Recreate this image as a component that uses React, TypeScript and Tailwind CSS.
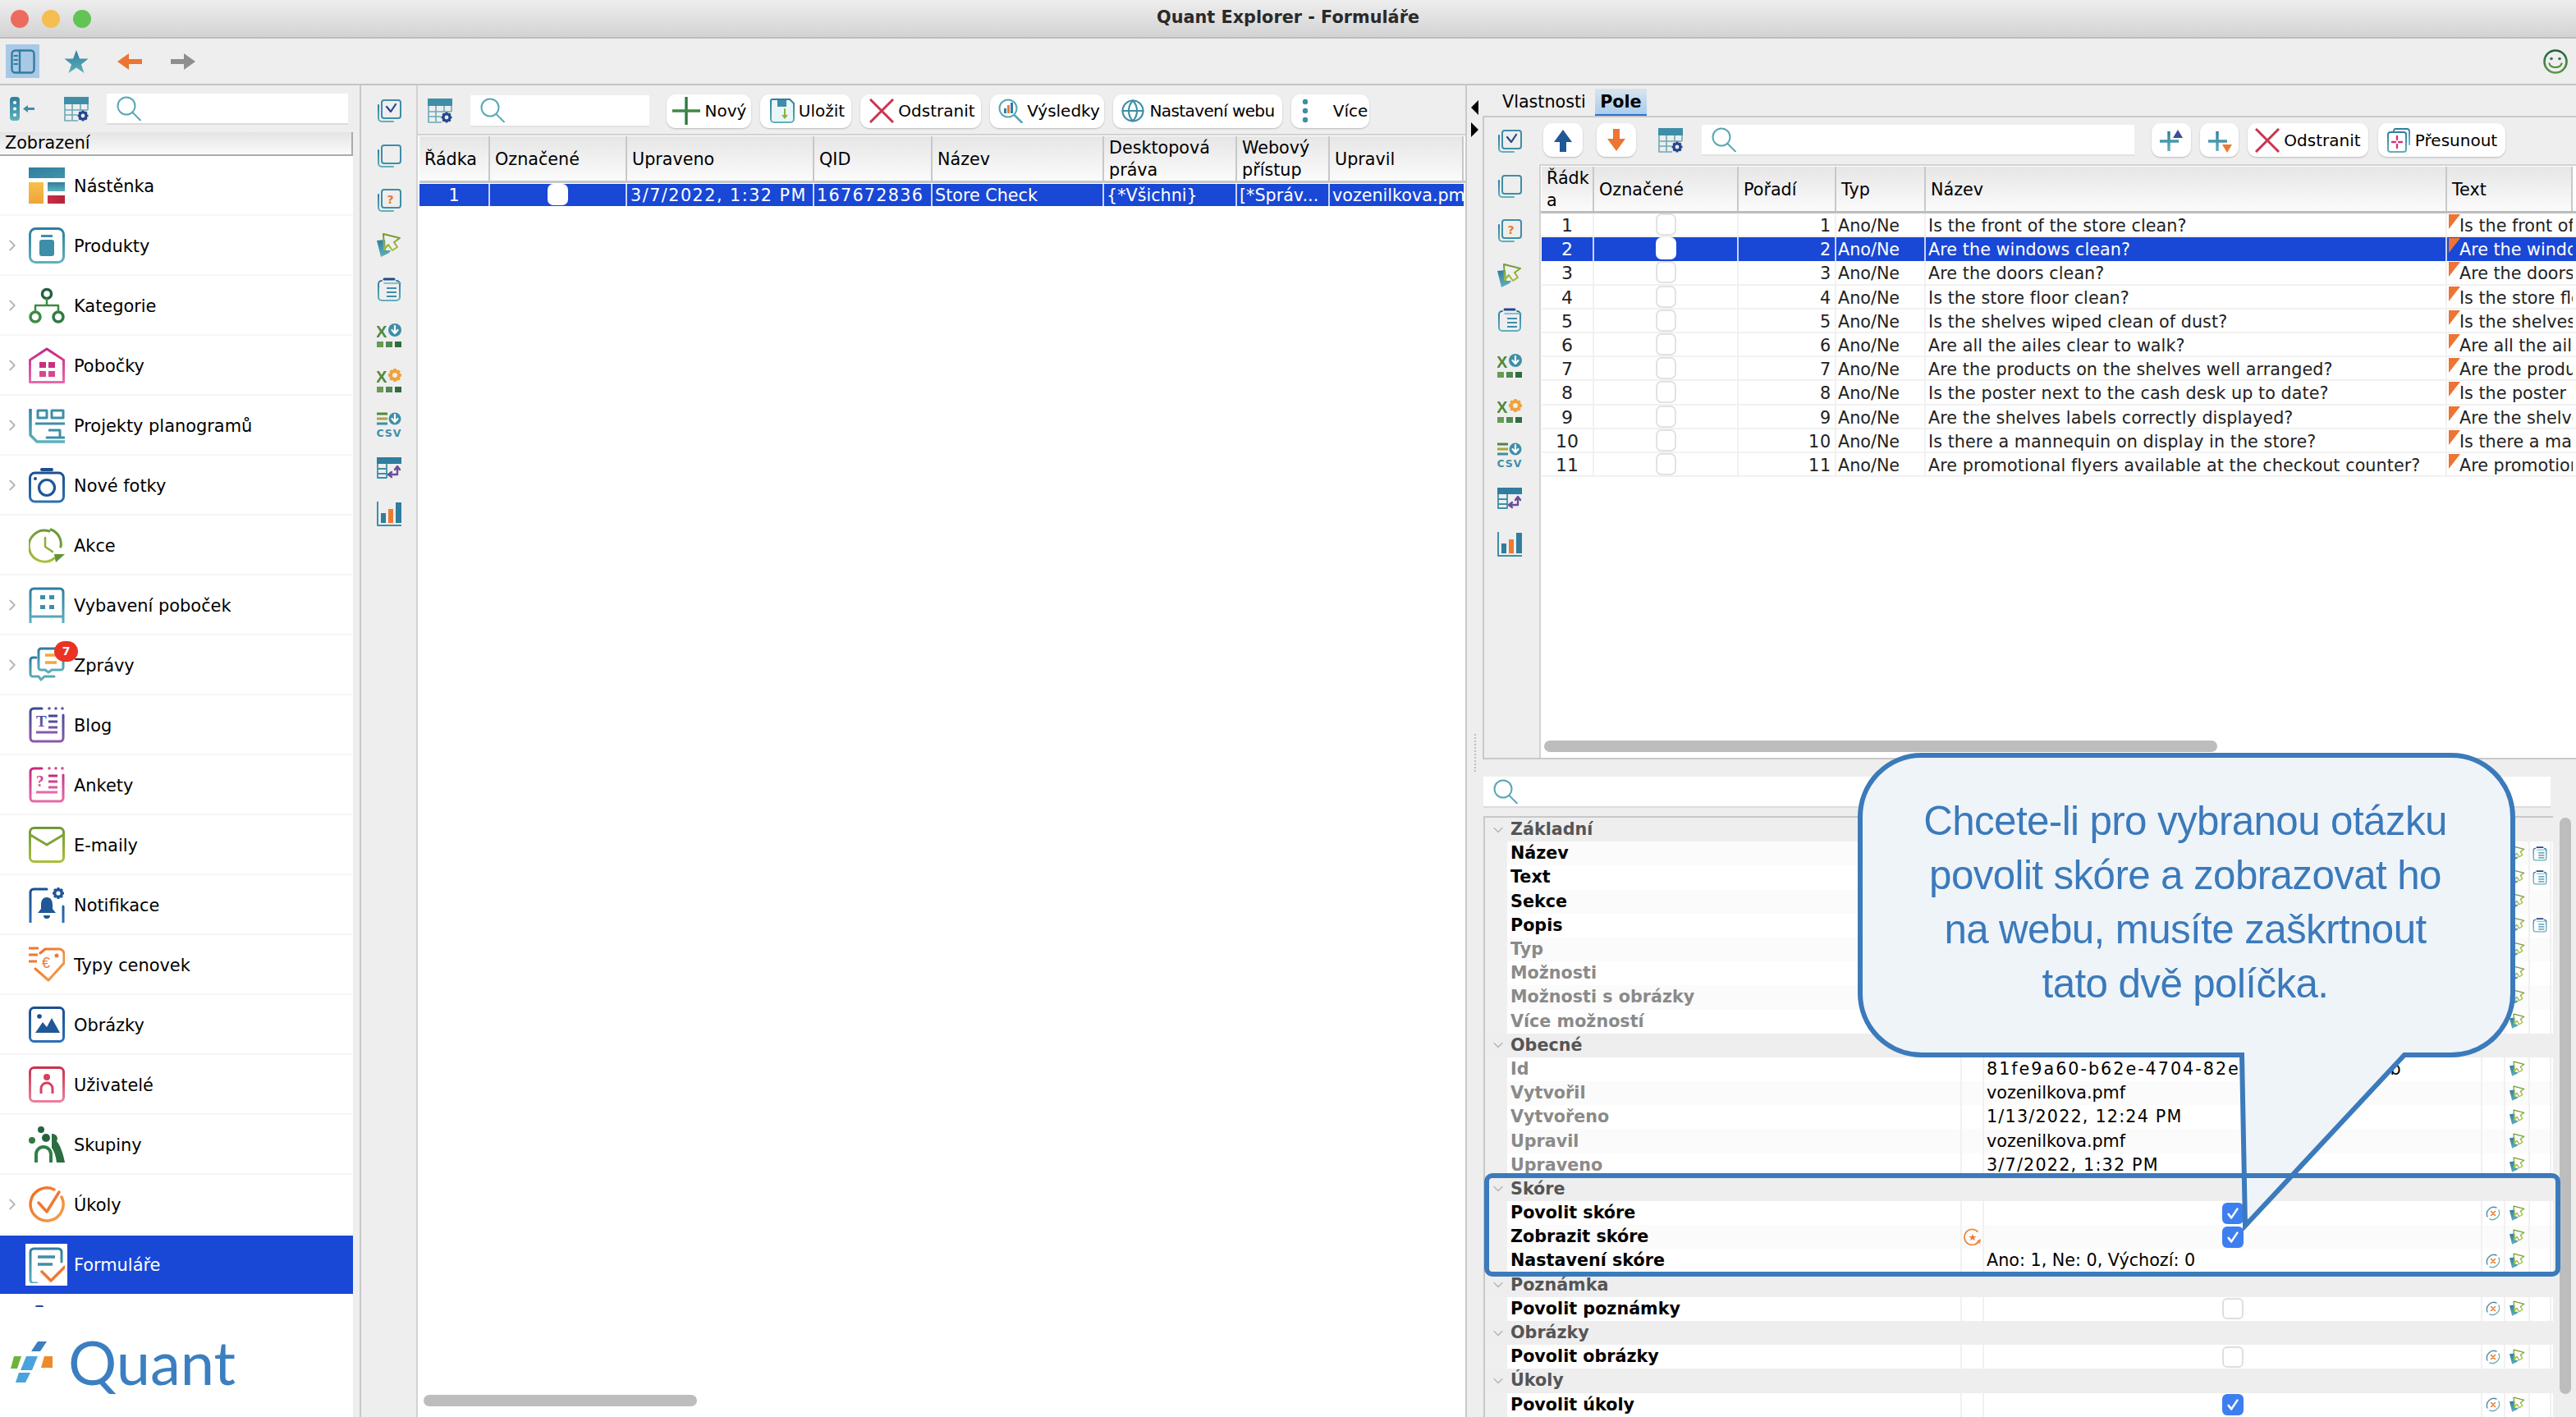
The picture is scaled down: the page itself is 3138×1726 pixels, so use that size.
import { ChevronDown, ChevronRight, Globe } from "lucide-react";
import type { ReactNode } from "react";

const Gradients = () => (
  <svg className="absolute w-0 h-0">
    <defs>
      <linearGradient id="teal" x1="0" y1="0" x2="0" y2="1">
        <stop offset="0" stopColor="#2f7d9f" />
        <stop offset="1" stopColor="#5fb1bb" />
      </linearGradient>
      <linearGradient id="tealDark" x1="0" y1="0" x2="1" y2="1">
        <stop offset="0" stopColor="#2f7d9f" />
        <stop offset="1" stopColor="#3f94aa" />
      </linearGradient>
      <linearGradient id="green" x1="0" y1="0" x2="0" y2="1">
        <stop offset="0" stopColor="#23633d" />
        <stop offset="1" stopColor="#5a9a4a" />
      </linearGradient>
      <linearGradient id="lime" x1="0" y1="0" x2="0" y2="1">
        <stop offset="0" stopColor="#6d9a35" />
        <stop offset="1" stopColor="#a9bf3a" />
      </linearGradient>
      <linearGradient id="mag" x1="0" y1="0" x2="0" y2="1">
        <stop offset="0" stopColor="#c42a80" />
        <stop offset="1" stopColor="#e66aa8" />
      </linearGradient>
      <linearGradient id="purple" x1="0" y1="0" x2="0" y2="1">
        <stop offset="0" stopColor="#3b4a96" />
        <stop offset="1" stopColor="#8a5aa8" />
      </linearGradient>
      <linearGradient id="blue" x1="0" y1="0" x2="0" y2="1">
        <stop offset="0" stopColor="#1c4f8f" />
        <stop offset="1" stopColor="#2e6fb5" />
      </linearGradient>
      <linearGradient id="rose" x1="0" y1="0" x2="0" y2="1">
        <stop offset="0" stopColor="#c8324f" />
        <stop offset="1" stopColor="#ea7f9a" />
      </linearGradient>
      <linearGradient id="orange" x1="0" y1="0" x2="1" y2="1">
        <stop offset="0" stopColor="#ed6d28" />
        <stop offset="1" stopColor="#f2a24a" />
      </linearGradient>
      <linearGradient id="yellow" x1="0" y1="0" x2="0" y2="1">
        <stop offset="0" stopColor="#f5c24a" />
        <stop offset="1" stopColor="#f0a23a" />
      </linearGradient>
      <linearGradient id="red" x1="0" y1="0" x2="1" y2="0">
        <stop offset="0" stopColor="#c72f45" />
        <stop offset="1" stopColor="#b3243a" />
      </linearGradient>
    </defs>
  </svg>
);

const Ic = ({ s = 44, children, className = "" }: { s?: number; children: ReactNode; className?: string }) => (
  <svg viewBox={`0 0 ${s} ${s}`} fill="none" className={className} strokeLinecap="round" strokeLinejoin="round">
    {children}
  </svg>
);

// sidebar icons
const big = "w-[44px] h-[44px] shrink-0";
const Dashboard = () => (
  <Ic className={big}>
    <rect y="0" width="44" height="13" fill="url(#tealDark)" />
    <rect y="18" width="18" height="26" fill="url(#yellow)" />
    <rect x="23" y="18" width="21" height="11" fill="url(#teal)" />
    <rect x="23" y="34" width="21" height="10" fill="url(#red)" />
  </Ic>
);
const Product = () => (
  <Ic className={big}>
    <rect x="1.5" y="1.5" width="41" height="41" rx="7" stroke="url(#teal)" strokeWidth="3" />
    <rect x="15" y="9" width="14" height="3" fill="#3f8ea8" />
    <rect x="13" y="15" width="18" height="20" rx="3" fill="#3f8ea8" />
  </Ic>
);
const Category = () => (
  <Ic className={big}>
    <circle cx="22" cy="8" r="5.5" stroke="#23633d" strokeWidth="3.5" />
    <circle cx="8" cy="36" r="6" stroke="#3f8a45" strokeWidth="3.5" />
    <circle cx="36" cy="36" r="6" stroke="#2f7a42" strokeWidth="3.5" />
    <path d="M22 14v8M8 30v-8h28v8" stroke="#3f8a45" strokeWidth="2.5" />
  </Ic>
);
const Branch = () => (
  <Ic className={big}>
    <path d="M22 2 42.5 15.5V42.5H1.5V15.5Z" stroke="url(#mag)" strokeWidth="3" />
    <rect x="13" y="18" width="8" height="7" fill="#c9307f" />
    <rect x="24" y="18" width="8" height="7" fill="#c9307f" />
    <rect x="13" y="29" width="8" height="7" fill="#d8478f" />
    <rect x="24" y="29" width="8" height="7" fill="#d8478f" />
  </Ic>
);
const Planogram = () => (
  <Ic className={big}>
    <path d="M2 2V34L10 42H44" stroke="url(#teal)" strokeWidth="3.5" strokeLinecap="butt" />
    <path d="M11 4h11v9H11ZM28 4h14v9H28ZM8 20h36" stroke="#3f8ea8" strokeWidth="3" strokeLinecap="butt" />
    <path d="M24 28h14v9" stroke="#3f8ea8" strokeWidth="3" strokeLinecap="butt" />
    <path d="M22 37h21" stroke="#3f8ea8" strokeWidth="3" />
  </Ic>
);
const Camera = () => (
  <Ic className={big}>
    <rect x="1.5" y="7" width="41" height="35" rx="6" stroke="url(#blue)" strokeWidth="3" />
    <rect x="14" y="1" width="16" height="4" rx="2" fill="#1c4f8f" />
    <circle cx="22" cy="25" r="9.5" stroke="#1f5797" strokeWidth="3.2" />
    <circle cx="8" cy="14" r="2" fill="#1c4f8f" />
  </Ic>
);
const Action = () => (
  <Ic className={big}>
    <path d="M25 5A19 19 0 1 0 31 38" stroke="url(#lime)" strokeWidth="3" />
    <path d="M20 13V24L29 30" stroke="#8fae3c" strokeWidth="2.5" />
    <path d="M27 3A19 19 0 0 1 39 24" stroke="#6d9a35" strokeWidth="3" />
    <path d="M31 33H44L33 43Z" fill="#5f9436" />
  </Ic>
);
const Equipment = () => (
  <Ic className={big}>
    <path d="M2 44V6a4 4 0 0 1 4-4H38a4 4 0 0 1 4 4V44M2 36H42" stroke="url(#teal)" strokeWidth="3" strokeLinecap="butt" />
    <rect x="14" y="10" width="6" height="5" fill="#3f8ea8" />
    <rect x="25" y="10" width="6" height="5" fill="#3f8ea8" />
    <rect x="14" y="22" width="6" height="5" fill="#3f8ea8" />
    <rect x="25" y="22" width="6" height="5" fill="#3f8ea8" />
  </Ic>
);
const Messages = () => (
  <Ic className={big}>
    <path d="M9 13H5a3 3 0 0 0-3 3V33a3 3 0 0 0 3 3h7l3 4 4-4h12" stroke="url(#teal)" strokeWidth="3" />
    <path d="M15 2H39a3 3 0 0 1 3 3V25a3 3 0 0 1-3 3H28l-4 3-4-3H15a3 3 0 0 1-3-3V5a3 3 0 0 1 3-3Z" stroke="url(#teal)" strokeWidth="3" fill="#fff" />
    <path d="M20 10H34M20 19H34" stroke="#f1a83a" strokeWidth="3.5" strokeLinecap="butt" />
  </Ic>
);
const FramedList = ({ stroke, mark }: { stroke: string; mark: string }) => (
  <Ic className={big}>
    <path d="M16 2H6a4 4 0 0 0-4 4V38a4 4 0 0 0 4 4H38a4 4 0 0 0 4-4V10" stroke={stroke} strokeWidth="3" />
    <circle cx="25" cy="2" r="1.8" fill={stroke} />
    <circle cx="33" cy="2" r="1.8" fill={stroke} />
    <circle cx="41" cy="2" r="1.8" fill={stroke} />
    <text x="9" y="24" fontFamily="'Liberation Serif', serif" fontWeight="700" fontSize="19" fill={stroke}>
      {mark}
    </text>
    <path d="M24 11H35M24 18H35M24 25H35M9 31H35" stroke={stroke} strokeWidth="3" strokeLinecap="butt" />
  </Ic>
);
const Mail = () => (
  <Ic className={big}>
    <rect x="1.5" y="1.5" width="41" height="41" rx="5" stroke="url(#lime)" strokeWidth="3" />
    <path d="M2 10 22 22 42 10" stroke="#7fa238" strokeWidth="3" />
  </Ic>
);
const Gear = ({ cx, cy, r, color }: { cx: number; cy: number; r: number; color: string }) => (
  <g>
    <circle cx={cx} cy={cy} r={r * 0.62} stroke={color} strokeWidth={r * 0.5} />
    {[0, 45, 90, 135].map((a) => (
      <path
        key={a}
        d={`M${cx - r} ${cy}H${cx + r}`}
        stroke={color}
        strokeWidth={r * 0.42}
        strokeLinecap="butt"
        strokeDasharray={`${r * 0.45} ${r * 1.1} ${r * 0.45}`}
        transform={`rotate(${a} ${cx} ${cy})`}
      />
    ))}
  </g>
);
const Notify = () => (
  <Ic className={big}>
    <path d="M22 3H6a4 4 0 0 0-4 4V44M42 24V44" stroke="url(#blue)" strokeWidth="3" />
    <path d="M22 13c5 0 7 4 7 9v5l4 5H11l4-5v-5c0-5 2-9 7-9Z" fill="#1f5797" />
    <path d="M18 35a4 4 0 0 0 8 0Z" fill="#1f5797" />
    <Gear cx={36} cy={8} r={7} color="#1f5797" />
  </Ic>
);
const PriceTag = () => (
  <Ic className={big}>
    <path d="M14 8 20 3H37a6 6 0 0 1 6 6V20L24 41 8 27" stroke="url(#orange)" strokeWidth="3" />
    <path d="M0 2H12M0 10H11M0 18H10" stroke="#ed7a33" strokeWidth="3" strokeLinecap="butt" />
    <circle cx="34" cy="11" r="2.5" fill="#ed7a33" />
    <text x="16" y="26" fontFamily="'Liberation Sans', sans-serif" fontSize="18" fill="#ed7a33">
      €
    </text>
  </Ic>
);
const Picture = () => (
  <Ic className={big}>
    <rect x="1.5" y="1.5" width="41" height="41" rx="5" stroke="url(#blue)" strokeWidth="3" />
    <circle cx="13" cy="12" r="2.8" fill="#1c4f8f" />
    <path d="M8 32 17 19 22 25 28 14 38 32Z" fill="#1f5797" />
  </Ic>
);
const User = () => (
  <Ic className={big}>
    <rect x="1.5" y="1.5" width="41" height="41" rx="5" stroke="url(#rose)" strokeWidth="3" />
    <circle cx="22" cy="13" r="4" fill="#d4435f" />
    <path d="M15 33V27a7 7 0 0 1 14 0V33" stroke="#d4435f" strokeWidth="3" strokeLinecap="butt" />
  </Ic>
);
const Groups = () => (
  <Ic className={big}>
    <circle cx="15" cy="4" r="4" fill="#23633d" />
    <circle cx="4" cy="17" r="4" fill="#2f7a42" />
    <circle cx="21" cy="14" r="5" fill="#23633d" />
    <path d="M28 9a6 6 0 0 1 6 9c4 4 8 15 10 26H34c-1-8-3-14-6-18Z" fill="#2b6d3f" />
    <path d="M9 44V34a9 9 0 0 1 18 0V44" stroke="#2f8048" strokeWidth="4" strokeLinecap="butt" />
  </Ic>
);
const Task = () => (
  <Ic className={big}>
    <path d="M31 4A20 20 0 1 0 40 13" stroke="url(#orange)" strokeWidth="3.5" />
    <path d="M12 20 22 31 37 7" stroke="#ed7a33" strokeWidth="3.5" />
  </Ic>
);
const FormIcon = () => (
  <Ic className={big}>
    <path d="M10 44H6a4 4 0 0 1-4-4V6a4 4 0 0 1 4-4H36a4 4 0 0 1 4 4V18" stroke="url(#teal)" strokeWidth="3" />
    <path d="M11 12H32M11 21H29" stroke="#3f8ea8" strokeWidth="3.5" strokeLinecap="butt" />
    <path d="M16 30 27 41 44 24" stroke="#ed7a33" strokeWidth="3.5" />
  </Ic>
);

// small side-rail icons
const sm = "w-[30px] h-[30px] shrink-0";
const StackBack = () => <path d="M2 8V24a4 4 0 0 0 4 4H20" stroke="url(#teal)" strokeWidth="2" />;
const StackCheck = () => (
  <Ic s={30} className={sm}>
    <StackBack />
    <rect x="6" y="2" width="23" height="22" rx="3" stroke="#3f8ea8" strokeWidth="2" />
    <path d="M12 10 17 16 23 7" stroke="#26478f" strokeWidth="2.2" />
  </Ic>
);
const StackEmpty = () => (
  <Ic s={30} className={sm}>
    <StackBack />
    <rect x="6" y="2" width="23" height="22" rx="3" stroke="#3f8ea8" strokeWidth="2" />
  </Ic>
);
const StackQuestion = () => (
  <Ic s={30} className={sm}>
    <StackBack />
    <rect x="6" y="2" width="23" height="22" rx="3" stroke="#3f8ea8" strokeWidth="2" />
    <text x="12.5" y="19" fontFamily="'DejaVu Sans', sans-serif" fontWeight="700" fontSize="14" fill="#e8772e">
      ?
    </text>
  </Ic>
);
const CursorShape = () => (
  <>
    <path d="M0 9 10 8 11 21 17 21 15 24 5 29Z" fill="url(#teal)" />
    <path d="M8 1 28 6 21 11 25 17 19 21 14 14 9 20Z" stroke="url(#lime)" strokeWidth="2" fill="#fff" fillOpacity="0.15" />
  </>
);
const CursorIcon = ({ className = sm }: { className?: string }) => (
  <Ic s={30} className={className}>
    <CursorShape />
  </Ic>
);
const Clipboard = ({ className = sm }: { className?: string }) => (
  <Ic s={30} className={className}>
    <path d="M6 4a4 4 0 0 0-4 4V24a4 4 0 0 0 4 4H24a4 4 0 0 0 4-4V8a4 4 0 0 0-4-4" stroke="url(#teal)" strokeWidth="2" />
    <path d="M9 2H21" stroke="#26478f" strokeWidth="3" />
    <path d="M9 7H29" stroke="#5fb1bb" strokeWidth="1.5" />
    <path d="M12 13H24M12 18H24M12 23H24" stroke="#3f8ea8" strokeWidth="2" strokeLinecap="butt" />
  </Ic>
);
const Squares = () => (
  <>
    <rect x="0" y="23" width="8" height="7" fill="#6a9a55" />
    <rect x="11" y="23" width="8" height="7" fill="#4f8a4f" />
    <rect x="22" y="23" width="8" height="7" fill="#2f6d40" />
  </>
);
const XDown = () => (
  <Ic s={30} className={sm}>
    <text x="-1" y="18" fontFamily="'Liberation Sans', sans-serif" fontWeight="700" fontSize="20" fill="#4f8a3c">
      X
    </text>
    <circle cx="22" cy="9" r="8" fill="#3f8ea8" />
    <path d="M22 4V12M18.5 9 22 13 25.5 9" stroke="#fff" strokeWidth="2.2" />
    <Squares />
  </Ic>
);
const XGear = () => (
  <Ic s={30} className={sm}>
    <text x="-1" y="18" fontFamily="'Liberation Sans', sans-serif" fontWeight="700" fontSize="20" fill="#4f8a3c">
      X
    </text>
    <Gear cx={22} cy={9} r={8} color="#f0a23a" />
    <Squares />
  </Ic>
);
const CsvDown = () => (
  <Ic s={30} className={sm}>
    <path d="M0 2H13" stroke="#4f8a3c" strokeWidth="3" strokeLinecap="butt" />
    <path d="M0 8H13" stroke="#a9a83a" strokeWidth="3" strokeLinecap="butt" />
    <path d="M0 14H13" stroke="#3f8ea8" strokeWidth="3" strokeLinecap="butt" />
    <circle cx="22" cy="8" r="7.5" fill="#3f8ea8" />
    <path d="M22 3V11M18.5 8 22 12 25.5 8" stroke="#fff" strokeWidth="2.2" />
    <text x="-0.5" y="30" fontFamily="'DejaVu Sans', sans-serif" fontWeight="700" fontSize="12.5" fill="#3f8ea8" textLength="30">
      CSV
    </text>
  </Ic>
);
const TableSwap = () => (
  <Ic s={30} className={sm}>
    <rect x="0" y="0" width="30" height="8" fill="#2f7d9f" />
    <path d="M1 8V25H12V8M1 14H12M1 20H12" stroke="#3f8ea8" strokeWidth="1.8" strokeLinecap="butt" />
    <path d="M25 12V21H15M22 15 25 11 28 15M18 18 14 21 18 24" stroke="#6a4e9a" strokeWidth="2.4" />
  </Ic>
);
const Bars = () => (
  <Ic s={30} className={sm}>
    <path d="M1 0V29H30" stroke="#3f8ea8" strokeWidth="2" strokeLinecap="butt" />
    <rect x="5" y="14" width="6" height="12" fill="#2f7d9f" />
    <rect x="14" y="9" width="6" height="17" fill="#ed7a33" />
    <rect x="23" y="1" width="7" height="25" fill="#2f7d9f" />
  </Ic>
);
const TableGear = () => (
  <Ic s={30} className={sm}>
    <rect x="0" y="0" width="30" height="9" fill="#3f8ea8" />
    <path d="M1 9V29H17M1 16H29M1 22H16M10 9V28M20 9V16M29 9V16" stroke="#6aa9b8" strokeWidth="1.6" strokeLinecap="butt" />
    <Gear cx={23} cy={23} r={6.5} color="#26478f" />
  </Ic>
);
const SearchIcon = () => (
  <Ic s={30} className={sm}>
    <circle cx="12" cy="12" r="10.5" stroke="#5aa7b5" strokeWidth="2" />
    <path d="M19.5 20 29 29.5" stroke="#5aa7b5" strokeWidth="2" />
  </Ic>
);
const BigPlus = () => (
  <Ic s={36} className="w-[36px] h-[36px] shrink-0">
    <path d="M18 1V35" stroke="#2f7a42" strokeWidth="3.4" strokeLinecap="butt" />
    <path d="M1 18H35" stroke="#3f8a45" strokeWidth="3.4" strokeLinecap="butt" />
  </Ic>
);
const BigX = () => (
  <Ic s={30} className="w-[30px] h-[30px] shrink-0">
    <path d="M1 1 29 29M29 1 1 29" stroke="#c9344e" strokeWidth="3" strokeLinecap="butt" />
  </Ic>
);
const CircleX = () => (
  <Ic s={20} className="w-[20px] h-[20px] shrink-0">
    <path d="M14 3A8.5 8.5 0 0 0 3 14" stroke="#4d8ca8" strokeWidth="1.4" />
    <path d="M6 17A8.5 8.5 0 0 0 17 6" stroke="#6fb0bb" strokeWidth="1.4" />
    <path d="M7.5 7.5 12.5 12.5M12.5 7.5 7.5 12.5" stroke="#e8772e" strokeWidth="1.5" />
  </Ic>
);
const CircleStar = () => (
  <Ic s={22} className="w-[22px] h-[24px] shrink-0">
    <path d="M17 4A9.5 9.5 0 1 0 19 15" stroke="#ed8a3c" strokeWidth="1.8" />
    <path d="M11 7 12.3 10H15.5L13 12 14 15 11 13.2 8 15 9 12 6.5 10H9.7Z" fill="#ed7a33" />
    <path d="M20 19 21 13 16 16Z" fill="#ed8a3c" />
  </Ic>
);

const Fill = "bg-[#eeeeee]";
const cellLine = "border-r-2 border-[#f1f1f1]";

const TbButton = ({ icon, label, className = "", labelClass = "" }: { icon: ReactNode; label?: string; className?: string; labelClass?: string }) => (
  <div className={`h-[41px] bg-white rounded-[11px] shadow-[0_1px_2px_rgba(0,0,0,0.22)] flex items-center justify-center shrink-0 ${className}`}>
    {icon}
    {label && <span className={`text-[20px] text-black ml-[5px] whitespace-nowrap ${labelClass}`}>{label}</span>}
  </div>
);

const Plus2 = ({ up }: { up: boolean }) => (
  <Ic s={30} className={sm}>
    <path d="M12 4V28M1 16H24" stroke="url(#teal)" strokeWidth="3.4" strokeLinecap="butt" />
    {up ? <path d="M23 2 29 12H17Z" fill="#3c4d98" /> : <path d="M18 20H30L24 30Z" fill="#ed7a33" />}
  </Ic>
);

const sideRail = [StackCheck, StackEmpty, StackQuestion, CursorIcon, Clipboard, XDown, XGear, CsvDown, TableSwap, Bars];

const SideRail = ({ className }: { className: string }) => (
  <div className={`w-[67px] shrink-0 flex flex-col items-center gap-[24.6px] ${className}`}>
    {sideRail.map((I, i) => (
      <I key={i} />
    ))}
  </div>
);

const navItems: { label: string; icon: ReactNode; chevron?: boolean }[] = [
  { label: "Nástěnka", icon: <Dashboard /> },
  { label: "Produkty", icon: <Product />, chevron: true },
  { label: "Kategorie", icon: <Category />, chevron: true },
  { label: "Pobočky", icon: <Branch />, chevron: true },
  { label: "Projekty planogramů", icon: <Planogram />, chevron: true },
  { label: "Nové fotky", icon: <Camera />, chevron: true },
  { label: "Akce", icon: <Action /> },
  { label: "Vybavení poboček", icon: <Equipment />, chevron: true },
  { label: "Zprávy", icon: <Messages />, chevron: true },
  { label: "Blog", icon: <FramedList stroke="url(#purple)" mark="T" /> },
  { label: "Ankety", icon: <FramedList stroke="url(#mag)" mark="?" /> },
  { label: "E-maily", icon: <Mail /> },
  { label: "Notifikace", icon: <Notify /> },
  { label: "Typy cenovek", icon: <PriceTag /> },
  { label: "Obrázky", icon: <Picture /> },
  { label: "Uživatelé", icon: <User /> },
  { label: "Skupiny", icon: <Groups /> },
  { label: "Úkoly", icon: <Task />, chevron: true },
];

const Sidebar = () => (
  <aside className={`w-[438px] shrink-0 flex flex-col ${Fill}`}>
    <div className="h-[57px] flex items-center pl-[12px] shrink-0">
      <Ic s={30} className={sm}>
        <rect x="0" y="0" width="12" height="29" rx="4" fill="url(#teal)" />
        <circle cx="6" cy="7" r="2" fill="#fff" />
        <circle cx="6" cy="14.5" r="2" fill="#fff" />
        <circle cx="6" cy="22" r="2" fill="#fff" />
        <path d="M19 14.5H30" stroke="#3f8ea8" strokeWidth="3" strokeLinecap="butt" />
        <path d="M16 14.5 22 10V19Z" fill="#3f8ea8" />
      </Ic>
      <div className="ml-[36px]">
        <TableGear />
      </div>
      <div className="ml-[22px] w-[294px] h-[38px] bg-white border-b-2 border-[#dcdcdc] flex items-center pl-[12px]">
        <SearchIcon />
      </div>
    </div>
    <div className="w-[430px] h-[29px] bg-gradient-to-b from-[#e4e4e4] to-[#fafafa] border-r-2 border-b-2 border-[#aaaaaa] flex items-center pl-[6px] text-[20.7px] text-black shrink-0">
      Zobrazení
    </div>
    <div className="w-[430px] flex-1 bg-white flex flex-col">
      {navItems.map((n) => (
        <div key={n.label} className="relative h-[73px] shrink-0 flex items-center pt-[1px] border-b-2 border-[#f6f6f6]">
          <div className="w-[35px] shrink-0 flex justify-center pr-[6px]">
            {n.chevron && <ChevronRight className="w-[22px] h-[22px] text-[#b5b5b5]" strokeWidth={2} />}
          </div>
          {n.icon}
          <span className="ml-[11px] pt-[3px] text-[20.9px] text-black">{n.label}</span>
          {n.label === "Zprávy" && (
            <span className="absolute left-[66px] top-[7px] w-[29px] h-[25px] rounded-full bg-[#ea3323] text-white text-[14px] font-bold flex items-center justify-center">
              7
            </span>
          )}
        </div>
      ))}
      <div className="mt-[1px] h-[71px] shrink-0 bg-[#1947d6] flex items-center pl-[31px]">
        <div className="w-[51px] h-[51px] bg-white flex items-center justify-center">
          <FormIcon />
        </div>
        <span className="ml-[8px] pt-[3px] text-[20.9px] text-white">Formuláře</span>
      </div>
      <div className="h-[16px] shrink-0 flex items-end pl-[43px]">
        <div className="w-[10px] h-[2px] rounded-t-full bg-[#26478f]" />
      </div>
      <div className="flex-1 flex items-center pl-[12px]">
        <svg viewBox="0 0 52 50" className="w-[52px] h-[50px] shrink-0">
          <path d="M34 0H45L37 12H26Z" fill="#3b7fc0" />
          <path d="M5 18H14L9 33H1Z" fill="#6eb23c" />
          <path d="M20 18H34L27 35H13Z" fill="#4ba3dc" />
          <path d="M42 18H52V32H38Z" fill="#ed8a2e" />
          <path d="M11 38H25L19 50H7Z" fill="#4ba3dc" />
        </svg>
        <span className="ml-[19px] font-['Lato',sans-serif] text-[74px] leading-none text-[#3b7fc0]">Quant</span>
      </div>
    </div>
  </aside>
);

const colsMain = [
  { label: "Řádka", w: "w-[86px]" },
  { label: "Označené", w: "w-[167px]" },
  { label: "Upraveno", w: "w-[228px]" },
  { label: "QID", w: "w-[144px]" },
  { label: "Název", w: "w-[209px]" },
  { label: "Desktopová práva", w: "w-[162px]" },
  { label: "Webový přístup", w: "w-[113px]" },
  { label: "Upravil", w: "w-[163px]" },
];

const HeadCell = ({ label, w, h }: { label: string; w: string; h: string }) => (
  <div className={`${w} ${h} shrink-0 flex items-center pl-[6px] pt-[2px] border-r-2 border-[#c8c8c8] text-[20.7px] leading-[27px] text-black bg-gradient-to-b from-[#e6e6e6] to-[#fbfbfb]`}>
    <span className="whitespace-pre-line">{label}</span>
  </div>
);

const MiddlePanel = () => (
  <section className="w-[1349px] shrink-0 flex border-l-2 border-r-2 border-[#c9c9c9]">
    <SideRail className="pt-[16px]" />
    <div className="flex-1 min-w-0 flex flex-col border-l-2 border-[#d2d2d2]">
      <div className="h-[59px] flex items-center pl-[12px] pt-[3px] shrink-0">
        <TableGear />
        <div className="ml-[22px] w-[218px] h-[39px] bg-white border-b-2 border-[#e2e2e2] flex items-center pl-[12px]">
          <SearchIcon />
        </div>
        <div className="ml-[21px] flex gap-[11px]">
          <TbButton className="w-[103px]" icon={<BigPlus />} label="Nový" />
          <TbButton
            className="w-[111px] pl-[4px]"
            icon={
              <Ic s={30} className={sm}>
                <path d="M3 1H24L29 6V25a4 4 0 0 1-4 4H5a4 4 0 0 1-4-4V3a2 2 0 0 1 2-2Z" stroke="url(#teal)" strokeWidth="2" fill="#eaf5f7" />
                <rect x="9" y="2" width="11" height="8" fill="#3f8ea8" />
                <path d="M18 13V22" stroke="#8fae3c" strokeWidth="2" />
                <path d="M14 20H22L18 25Z" fill="#8fae3c" />
              </Ic>
            }
            label="Uložit"
          />
          <TbButton className="w-[147px] pl-[4px]" icon={<BigX />} label="Odstranit" />
          <TbButton
            className="w-[139px] pl-[5px]"
            icon={
              <Ic s={30} className={sm}>
                <circle cx="12" cy="12" r="10.5" stroke="#5aa7b5" strokeWidth="2" />
                <path d="M19.5 20 29 29.5" stroke="#5aa7b5" strokeWidth="2.6" />
                <rect x="7" y="12" width="3" height="6" fill="#2f7d9f" />
                <rect x="11" y="8" width="3" height="10" fill="#ed7a33" />
                <rect x="15" y="5" width="3" height="13" fill="#2f7d9f" />
              </Ic>
            }
            label="Výsledky"
          />
          <TbButton
            className="w-[206px]"
            icon={<Globe className="w-[30px] h-[30px] text-[#3f8ea8]" strokeWidth={1.7} />}
            label="Nastavení webu"
            labelClass="tracking-[-0.6px]"
          />
          <TbButton
            className="w-[95px]"
            icon={
              <Ic s={30} className="w-[30px] h-[30px] mr-[14px]">
                <circle cx="15" cy="4" r="3.2" fill="#3f8ea8" />
                <circle cx="15" cy="15" r="3.2" fill="#3f8ea8" />
                <circle cx="15" cy="26" r="3.2" fill="#3f8ea8" />
              </Ic>
            }
            label="Více"
          />
        </div>
      </div>
      <div className="flex-1 min-h-0 flex flex-col border-t-2 border-[#d2d2d2] bg-white pl-[2px] pt-[1px] relative overflow-hidden">
        <div className="flex border-b-[3px] border-[#c8c8c8]">
          {colsMain.map((c) => (
            <HeadCell key={c.label} label={c.label} w={c.w} h="h-[54px]" />
          ))}
        </div>
        <div className="mt-[1px] h-[27px] flex bg-[#1947d6] text-white text-[20.7px] leading-[28px] w-[1272px]">
          <div className="w-[86px] shrink-0 text-center border-r-2 border-[#c9d4f5]">1</div>
          <div className="w-[167px] shrink-0 flex justify-center border-r-2 border-[#c9d4f5]">
            <div className="w-[25px] h-[26px] rounded-[7px] bg-white" />
          </div>
          <div className="w-[228px] shrink-0 pl-[4px] tracking-[1.5px] border-r-2 border-[#c9d4f5] whitespace-nowrap">3/7/2022, 1:32 PM</div>
          <div className="w-[144px] shrink-0 pl-[3px] tracking-[1.3px] border-r-2 border-[#c9d4f5]">167672836</div>
          <div className="w-[209px] shrink-0 pl-[3px] border-r-2 border-[#c9d4f5]">Store Check</div>
          <div className="w-[162px] shrink-0 pl-[3px] border-r-2 border-[#c9d4f5]">{"{*Všichni}"}</div>
          <div className="w-[113px] shrink-0 pl-[3px] border-r-2 border-[#c9d4f5] overflow-hidden whitespace-nowrap">[*Správ...</div>
          <div className="w-[163px] shrink-0 pl-[3px] overflow-hidden whitespace-nowrap">vozenilkova.pmf</div>
        </div>
        <div className="flex-1" />
        <div className="h-[14px] w-[333px] ml-[5px] mb-[13px] rounded-full bg-[#bdbdbd] shrink-0" />
      </div>
    </div>
  </section>
);

const questions = [
  "Is the front of the store clean?",
  "Are the windows clean?",
  "Are the doors clean?",
  "Is the store floor clean?",
  "Is the shelves wiped clean of dust?",
  "Are all the ailes clear to walk?",
  "Are the products on the shelves well arranged?",
  "Is the poster next to the cash desk up to date?",
  "Are the shelves labels correctly displayed?",
  "Is there a mannequin on display in the store?",
  "Are promotional flyers available at the checkout counter?",
];

const FieldsTable = () => (
  <div className="flex-1 min-w-0 flex flex-col border-l-2 border-t-2 border-[#d2d2d2] bg-white relative overflow-hidden">
    <div className="flex pl-[1px] pt-[1px] border-b-[3px] border-[#bdbdbd]">
      <HeadCell label={"Řádk\na"} w="w-[64px]" h="h-[54px]" />
      <HeadCell label="Označené" w="w-[176px]" h="h-[54px]" />
      <HeadCell label="Pořadí" w="w-[119px]" h="h-[54px]" />
      <HeadCell label="Typ" w="w-[109px]" h="h-[54px]" />
      <HeadCell label="Název" w="w-[635px]" h="h-[54px]" />
      <HeadCell label="Text" w="w-[153px]" h="h-[54px]" />
    </div>
    {questions.map((q, i) => {
      const sel = i === 1;
      const line = sel ? "border-r-2 border-[#c9d4f5]" : cellLine;
      return (
        <div
          key={q}
          className={`ml-[1px] h-[29.2px] shrink-0 flex text-[20.7px] leading-[30px] whitespace-nowrap ${
            sel ? "bg-[#1947d6] text-white" : "border-b-2 border-[#f1f1f1] text-[#222222]"
          }`}
        >
          <div className={`w-[64px] shrink-0 text-center text-[22px] ${line}`}>{i + 1}</div>
          <div className={`w-[176px] shrink-0 flex justify-center ${line}`}>
            <div className={`w-[25px] h-[27px] rounded-[7px] ${sel ? "bg-white" : "bg-white border-2 border-[#e2e2e2]"}`} />
          </div>
          <div className={`w-[119px] shrink-0 text-right pr-[4px] tracking-[0.8px] ${line}`}>{i + 1}</div>
          <div className={`w-[109px] shrink-0 pl-[2px] ${line}`}>Ano/Ne</div>
          <div className={`w-[635px] shrink-0 pl-[3px] tracking-[0.07px] ${line}`}>{q}</div>
          <div className="w-[153px] shrink-0 pl-[15px] relative overflow-hidden">
            <span className="absolute left-[2px] top-[1px] w-0 h-0 border-t-[18px] border-r-[14px] border-t-[#ed7433] border-r-transparent" />
            {q}
          </div>
        </div>
      );
    })}
    <div className="flex-1" />
    <div className="h-[14px] w-[820px] ml-[4px] mb-[7px] rounded-full bg-[#bdbdbd] shrink-0" />
  </div>
);

type PropRow = {
  label: string;
  group?: boolean;
  muted?: boolean;
  value?: string;
  mono?: string;
  check?: boolean;
  reset?: boolean;
  star?: boolean;
  clip?: boolean;
};

const props: PropRow[] = [
  { label: "Základní", group: true },
  { label: "Název", clip: true },
  { label: "Text", clip: true },
  { label: "Sekce" },
  { label: "Popis", clip: true },
  { label: "Typ", muted: true },
  { label: "Možnosti", muted: true },
  { label: "Možnosti s obrázky", muted: true },
  { label: "Více možností", muted: true },
  { label: "Obecné", group: true },
  { label: "Id", muted: true, value: "81fe9a60-b62e-4704-82eb-8a4c1f3d7e6b", mono: "tracking-[2px]" },
  { label: "Vytvořil", muted: true, value: "vozenilkova.pmf" },
  { label: "Vytvořeno", muted: true, value: "1/13/2022, 12:24 PM", mono: "tracking-[1.2px]" },
  { label: "Upravil", muted: true, value: "vozenilkova.pmf" },
  { label: "Upraveno", muted: true, value: "3/7/2022, 1:32 PM", mono: "tracking-[1.2px]" },
  { label: "Skóre", group: true },
  { label: "Povolit skóre", check: true, reset: true },
  { label: "Zobrazit skóre", check: true, star: true },
  { label: "Nastavení skóre", value: "Ano: 1, Ne: 0, Výchozí: 0", reset: true },
  { label: "Poznámka", group: true },
  { label: "Povolit poznámky", check: false, reset: true },
  { label: "Obrázky", group: true },
  { label: "Povolit obrázky", check: false, reset: true },
  { label: "Úkoly", group: true },
  { label: "Povolit úkoly", check: true, reset: true },
];

const CheckBox = ({ on }: { on: boolean }) =>
  on ? (
    <div className="w-[26px] h-[26px] rounded-[6px] bg-[#3d7ff0] flex items-center justify-center">
      <svg viewBox="0 0 20 20" className="w-[18px] h-[18px]">
        <path d="M4 11 8 16 16 4" stroke="#fff" strokeWidth="2.8" fill="none" strokeLinecap="round" strokeLinejoin="round" />
      </svg>
    </div>
  ) : (
    <div className="w-[26px] h-[26px] rounded-[6px] bg-white border-2 border-[#dedede]" />
  );

const PropertyTable = () => (
  <div className="flex-1 min-h-0 flex pl-[1px]">
    <div className="w-[1303px] shrink-0 border-l-2 border-t-2 border-[#c8c8c8] overflow-hidden">
      {props.map((p, i) =>
        p.group ? (
          <div key={p.label} className="h-[29.2px] flex items-center bg-[#eeeeee] text-[#555555] text-[20.7px] font-bold whitespace-nowrap">
            <div className="w-[31px] shrink-0 flex justify-center">
              <ChevronDown className="w-[20px] h-[20px] text-[#b5b5b5]" strokeWidth={1.6} />
            </div>
            {p.label}
          </div>
        ) : (
          <div
            key={p.label}
            className={`h-[29.2px] flex items-center text-[20.7px] whitespace-nowrap ${i % 2 ? "bg-[#fbfbfb]" : "bg-white"}`}
          >
            <div className="w-[27px] h-full shrink-0 bg-[#efefef]" />
            <div className={`w-[552px] pl-[4px] shrink-0 font-bold ${p.muted ? "text-[#8a8a8a]" : "text-black"}`}>{p.label}</div>
            <div className="w-[29px] h-full shrink-0 flex items-center justify-center border-x-2 border-[#f1f1f1]">
              {p.star && <CircleStar />}
            </div>
            <div className={`w-[605px] h-full shrink-0 flex items-center text-black ${p.mono ?? ""} ${p.check !== undefined ? "justify-center" : "pl-[3px]"}`}>
              {p.check !== undefined ? <CheckBox on={p.check} /> : p.value}
            </div>
            <div className="w-[30px] h-full shrink-0 flex items-center justify-center border-x-2 border-[#f1f1f1]">
              {p.reset && <CircleX />}
            </div>
            <div className="w-[28px] h-full shrink-0 flex items-center justify-center">
              <CursorIcon className="w-[19px] h-[20px]" />
            </div>
            <div className="w-[28px] h-full shrink-0 flex items-center justify-center border-x-2 border-[#f1f1f1]">
              {p.clip && <Clipboard className="w-[18px] h-[20px]" />}
            </div>
          </div>
        )
      )}
    </div>
    <div className="w-[14px] ml-[8px] mt-[2px] mb-[28px] rounded-full bg-[#bdbdbd]" />
  </div>
);

const RightPanel = () => (
  <section className="flex-1 min-w-0 flex flex-col">
    <div className="h-[37px] shrink-0 flex items-end pl-[22px]">
      <div className="h-[34px] px-[2px] text-[20.7px] leading-[34px] text-black mr-[9px]">Vlastnosti</div>
      <div className="w-[63px] h-[33px] text-center text-[20.7px] leading-[32px] font-bold text-black bg-gradient-to-b from-[#d9e4ee] to-[#a9cdec] border-b-2 border-[#2f6fd0]">
        Pole
      </div>
    </div>
    <div className="h-[784px] shrink-0 flex border-t-2 border-l-2 border-b-2 border-[#c9c9c9]">
      <SideRail className="pt-[14px] pr-[6px]" />
      <div className="flex-1 min-w-0 flex flex-col">
        <div className="h-[57px] shrink-0 flex items-center pl-[5px] pb-[2px]">
          <TbButton className="w-[48px]" icon={
            <Ic s={30} className={sm}>
              <path d="M15 2 26 17H19V29H11V17H4Z" fill="#1f5797" />
            </Ic>
          } />
          <TbButton className="w-[48px] ml-[17px]" icon={
            <Ic s={30} className={sm}>
              <path d="M15 28 26 13H19V1H11V13H4Z" fill="#ed7433" />
            </Ic>
          } />
          <div className="ml-[27px]">
            <TableGear />
          </div>
          <div className="ml-[23px] w-[527px] h-[38px] bg-white border-b-2 border-[#e2e2e2] flex items-center pl-[12px]">
            <SearchIcon />
          </div>
          <TbButton className="w-[48px] ml-[21px]" icon={<Plus2 up />} />
          <TbButton className="w-[47px] ml-[11px]" icon={<Plus2 up={false} />} />
          <TbButton className="w-[147px] ml-[11px]" icon={<BigX />} label="Odstranit" />
          <TbButton
            className="w-[155px] ml-[12px]"
            icon={
              <Ic s={30} className={sm}>
                <path d="M9 4V3a2 2 0 0 1 2-2H25a3 3 0 0 1 3 3V20" stroke="url(#teal)" strokeWidth="1.8" />
                <rect x="2" y="5" width="22" height="24" rx="3" stroke="url(#teal)" strokeWidth="2" />
                <path d="M13 10V14M13 20V24M7 17H11M15 17H19" stroke="#d4357f" strokeWidth="2.4" />
              </Ic>
            }
            label="Přesunout"
          />
        </div>
        <FieldsTable />
      </div>
    </div>
    <div className="h-[69px] shrink-0 flex items-end pl-[1px] pb-[10px]">
      <div className="w-[1300px] h-[38px] bg-white border-b-2 border-[#dcdcdc] flex items-center pl-[12px]">
        <SearchIcon />
      </div>
    </div>
    <PropertyTable />
  </section>
);

const Callout = () => (
  <div className="absolute left-[2263px] top-[917px] w-[804px] h-[582px]">
    <svg viewBox="0 0 804 582" className="absolute inset-0 w-full h-full">
      <path
        d="M78 3H723a75 75 0 0 1 75 75V293a75 75 0 0 1-75 75H666L472 576 468 368H78a75 75 0 0 1-75-75V78A75 75 0 0 1 78 3Z"
        fill="#eff4f9"
        stroke="#3b7abb"
        strokeWidth="6"
        strokeLinejoin="miter"
      />
    </svg>
    <div className="relative w-[798px] pt-[50px] text-center font-['Liberation_Sans',sans-serif] text-[49.3px] leading-[66px] tracking-[-0.6px] text-[#3b7abb]">
      <div>Chcete-li pro vybranou otázku</div>
      <div>povolit skóre a zobrazovat ho</div>
      <div>na webu, musíte zaškrtnout</div>
      <div>tato dvě políčka.</div>
    </div>
  </div>
);

export default function App() {
  return (
    <div className={`relative w-[3138px] h-[1726px] overflow-hidden flex flex-col ${Fill} font-['DejaVu_Sans',sans-serif]`}>
      <Gradients />
      <header className="h-[47px] shrink-0 flex items-center relative bg-gradient-to-b from-[#eeeeee] to-[#d3d3d3] border-b-2 border-[#bdbdbd]">
        <div className="flex items-center gap-[16px] pl-[13px]">
          <span className="w-[22px] h-[22px] rounded-full bg-[#ee6a5f]" />
          <span className="w-[22px] h-[22px] rounded-full bg-[#f5be4f]" />
          <span className="w-[22px] h-[22px] rounded-full bg-[#62c454]" />
        </div>
        <div className="absolute inset-x-0 top-0 h-[44px] flex items-center justify-center text-[20.8px] font-bold text-[#2a2a2a]">
          Quant Explorer - Formuláře
        </div>
      </header>
      <div className="h-[57px] shrink-0 flex items-center border-b-2 border-[#c4c4c4]">
        <div className="ml-[7px] w-[41px] h-[41px] bg-[#a9c8e5] flex items-center justify-center">
          <Ic s={30} className={sm}>
            <rect x="1.5" y="1.5" width="27" height="27" rx="4" stroke="#2f7d9f" strokeWidth="2.4" />
            <path d="M11 2V28" stroke="#2f7d9f" strokeWidth="2.4" />
            <path d="M4.5 8H8M4.5 13H8M4.5 18H8" stroke="#2f7d9f" strokeWidth="2.2" />
          </Ic>
        </div>
        <div className="ml-[30px]">
          <Ic s={30} className={sm}>
            <path d="M15 1 19 11.5H29.5L21 18.5 24.5 29 15 22.5 5.5 29 9 18.5.5 11.5H11Z" fill="url(#teal)" />
          </Ic>
        </div>
        <div className="ml-[35px]">
          <Ic s={30} className={sm}>
            <path d="M0 15 14 5V12H30V18H14V25Z" fill="#ed7433" />
          </Ic>
        </div>
        <div className="ml-[35px]">
          <Ic s={30} className={sm}>
            <path d="M30 15 16 5V12H0V18H16V25Z" fill="#8e8e8e" />
          </Ic>
        </div>
        <div className="ml-auto mr-[10px]">
          <Ic s={30} className={sm}>
            <circle cx="15" cy="15" r="13.5" stroke="url(#green)" strokeWidth="2.6" />
            <circle cx="10" cy="11.5" r="1.8" fill="#3f6f4a" />
            <circle cx="20" cy="11.5" r="1.8" fill="#3f6f4a" />
            <path d="M7.5 17.5c2 6 13 6 15 0" stroke="#4f8a3c" strokeWidth="2.2" />
          </Ic>
        </div>
      </div>
      <main className="flex-1 min-h-0 flex">
        <Sidebar />
        <MiddlePanel />
        <div className="w-[19px] shrink-0 flex flex-col items-center pt-[18px]">
          <span className="w-0 h-0 border-y-[9px] border-r-[9px] border-y-transparent border-r-black" />
          <span className="w-0 h-0 mt-[9px] border-y-[9px] border-l-[9px] border-y-transparent border-l-black" />
          <span className="mt-[727px] h-[46px] border-l-2 border-dotted border-[#bdbdbd]" />
        </div>
        <RightPanel />
      </main>
      <Callout />
      <div className="absolute left-[1808px] top-[1429px] w-[1311px] h-[126px] rounded-[10px] border-[6px] border-[#3b7abb]" />
    </div>
  );
}
